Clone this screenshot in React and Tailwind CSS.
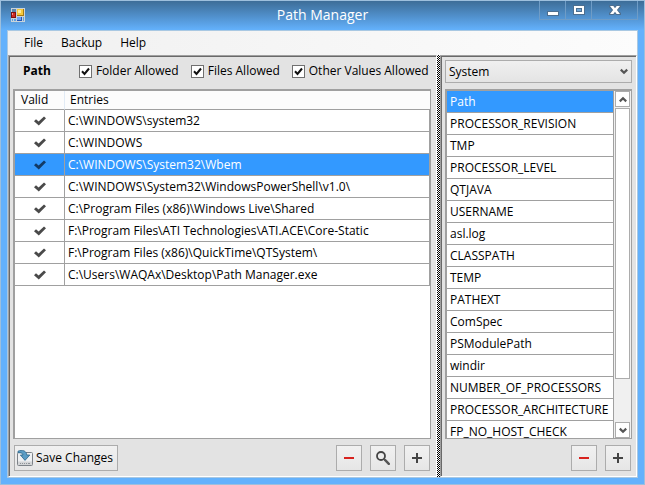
import { useState } from "react";

const paths = [
  "C:\\WINDOWS\\system32",
  "C:\\WINDOWS",
  "C:\\WINDOWS\\System32\\Wbem",
  "C:\\WINDOWS\\System32\\WindowsPowerShell\\v1.0\\",
  "C:\\Program Files (x86)\\Windows Live\\Shared",
  "F:\\Program Files\\ATI Technologies\\ATI.ACE\\Core-Static",
  "F:\\Program Files (x86)\\QuickTime\\QTSystem\\",
  "C:\\Users\\WAQAx\\Desktop\\Path Manager.exe",
];

const variables = [
  "Path",
  "PROCESSOR_REVISION",
  "TMP",
  "PROCESSOR_LEVEL",
  "QTJAVA",
  "USERNAME",
  "asl.log",
  "CLASSPATH",
  "TEMP",
  "PATHEXT",
  "ComSpec",
  "PSModulePath",
  "windir",
  "NUMBER_OF_PROCESSORS",
  "PROCESSOR_ARCHITECTURE",
  "FP_NO_HOST_CHECK",
];

/* -------------------------
    ICONS
------------------------- */
function AppIcon() {
  return (
    <svg width="14" height="14" viewBox="0 0 14 14" shapeRendering="crispEdges">
      <rect width="14" height="14" fill="#c9d3da" />
      <rect x="1" y="1" width="4" height="3" fill="#5d87ad" />
      <rect x="0" y="4" width="5" height="6" fill="#7d1111" />
      <rect x="1" y="5" width="3" height="4" fill="#cf2a22" />
      <rect x="1" y="5" width="1" height="2" fill="#f0928a" />
      <rect x="1" y="11" width="1" height="2" fill="#5da0e0" />
      <rect x="3" y="11" width="2" height="2" fill="#5da0e0" />
      <rect x="6" y="1" width="7" height="7" fill="#a67a10" />
      <rect x="6" y="1" width="6" height="6" fill="#f6c93c" />
      <rect x="7" y="2" width="3" height="3" fill="#fdeb9a" />
      <rect x="6" y="9" width="5" height="4" fill="#2458b8" />
      <rect x="6" y="9" width="4" height="3" fill="#6da2f2" />
      <rect x="12" y="9" width="1" height="4" fill="#5da0e0" />
    </svg>
  );
}

function ValidIcon({ selected }) {
  return (
    <svg width="12" height="10" viewBox="0 0 12 10" className="mx-auto block">
      <path d="M0 5.2 2 3.2 4.6 5.6 10 .4 12 2.2 4.8 9.4Z" fill={selected ? "#123a66" : "#4a4a4a"} />
    </svg>
  );
}

function SaveIcon() {
  return (
    <svg width="16" height="16" viewBox="0 0 16 16">
      <rect x=".5" y="2.5" width="15" height="13" rx="1" fill="#eef0f2" stroke="#7d8288" />
      <path d="M1 11.5h14V15H1z" fill="#d3d5d7" />
      <path d="M3 13.5h1M5 13.5h1M7 13.5h1M9 13.5h1M11 13.5h2" stroke="#8e9398" />
      <path d="M1 1.2C5-.6 9.6.6 9.8 5h3L8 10.4 3.4 5H6C6 3.4 4 2.4 1 2.8Z" fill="#5a9cc4" stroke="#2a648a" strokeWidth=".8" />
    </svg>
  );
}

function MinusIcon() {
  return (
    <svg width="12" height="12" viewBox="0 0 12 12" shapeRendering="crispEdges">
      <path d="M1 5h10v2H1z" fill="#d8231f" />
    </svg>
  );
}

function PlusIcon() {
  return (
    <svg width="12" height="12" viewBox="0 0 12 12" shapeRendering="crispEdges">
      <path d="M1 5h4V1h2v4h4v2H7v4H5V7H1z" fill="#444" />
    </svg>
  );
}

function SearchIcon() {
  return (
    <svg width="14" height="14" viewBox="0 0 14 14" fill="none">
      <circle cx="5" cy="5" r="4" stroke="#444" strokeWidth="1.8" />
      <path d="m8 8 1.5 1.5" stroke="#555" strokeWidth="1.5" />
      <path d="m9.2 9.2 3.6 3.6" stroke="#555" strokeWidth="2.4" strokeLinecap="round" />
    </svg>
  );
}

function Chevron({ up }) {
  return (
    <svg width="8" height="7" viewBox="0 0 8 7" fill="none" className="pointer-events-none">
      <path d={up ? "M.8 5.4 4 2.2 7.2 5.4" : "M.8 1.6 4 4.8 7.2 1.6"} stroke="#555" strokeWidth="2.2" />
    </svg>
  );
}

/* -------------------------
    CONTROLS
------------------------- */
function CheckOption({ label }) {
  return (
    <label className="flex items-center gap-1 whitespace-nowrap">
      <span className="grid">
        <input
          type="checkbox"
          defaultChecked
          className="peer col-start-1 row-start-1 size-[13px] appearance-none border border-[#707070] bg-white"
        />
        <svg
          viewBox="0 0 13 13"
          className="pointer-events-none invisible col-start-1 row-start-1 size-[13px] peer-checked:visible"
        >
          <path d="M3 6.3 5.5 9 10 3.5" fill="none" stroke="#111" strokeWidth="2" />
        </svg>
      </span>
      {label}
    </label>
  );
}

function IconButton({ label, children }) {
  return (
    <button
      aria-label={label}
      className="grid size-[26px] shrink-0 place-items-center border border-[#acacac] bg-linear-to-b from-[#f1f1f1] to-[#e6e6e6]"
    >
      {children}
    </button>
  );
}

function App() {
  const [selectedPath, setSelectedPath] = useState(2);
  const [selectedVar, setSelectedVar] = useState(0);

  return (
    <div className="flex h-screen cursor-default flex-col border border-[#9dbfdd] bg-[#63b1fc] font-['Open_Sans','Noto_Sans',sans-serif] text-xs leading-4 text-black">

      {/* TITLE BAR */}
      <header className="grid h-[29px] shrink-0 grid-cols-[1fr_auto_1fr] items-start bg-linear-to-b from-[#3d6d98] to-[#63b1fc] px-1.5">
        <div className="pt-[7px] pl-1">
          <AppIcon />
        </div>
        <h1 className="pt-1 text-sm leading-5 text-white">Path Manager</h1>
        <div className="flex h-[19px] justify-self-end border-x border-b border-[#6f9cc6]">
          <button aria-label="Minimize" className="grid w-[26px] place-items-center border-r border-[#6f9cc6]">
            <svg width="12" height="16" viewBox="0 0 12 16" shapeRendering="crispEdges">
              <path d="M0 9h12v5H0z" fill="#4d6f90" />
              <path d="M1 10h10v3H1z" fill="#fff" />
            </svg>
          </button>
          <button aria-label="Maximize" className="grid w-[26px] place-items-center border-r border-[#6f9cc6]">
            <svg width="12" height="10" viewBox="0 0 12 10" shapeRendering="crispEdges">
              <path d="M0 0h12v10H0z" fill="#4d6f90" />
              <path d="M1 1h10v8H1z" fill="#fff" />
              <path d="M3 3h6v4H3z" fill="#4d6f90" />
              <path d="M4 4h4v2H4z" fill="#6fa6d8" />
            </svg>
          </button>
          <button aria-label="Close" className="grid w-[45px] place-items-center">
            <svg width="12" height="10" viewBox="0 0 12 10">
              <path d="M0 0h5l1 1.500L7 0h5v2L9 5l3 3v2H7L6 8.500 5 10H0V8l3-3-3-3Z" fill="#4d6f90" />
              <path d="M1 1h3.300L6 3.200 7.700 1H11L7.900 5 11 9H7.700L6 6.800 4.300 9H1l3.100-4Z" fill="#fff" />
            </svg>
          </button>
        </div>
      </header>

      <div className="mx-1.5 mb-1.5 flex min-h-0 flex-1 flex-col border border-[#a9c8e2] bg-[#e3e3e3]">

        {/* MENU */}
        <nav className="flex h-6 shrink-0 items-center gap-0.5 bg-linear-to-r from-[#f0f0f0] to-[#fcfcfc] px-2">
          <button className="px-2">File</button>
          <button className="px-2">Backup</button>
          <button className="px-2">Help</button>
        </nav>

        <main className="flex min-h-0 flex-1">

          {/* PATH ENTRIES */}
          <section className="flex min-w-0 flex-1 flex-col border border-t-[#a0a0a0] border-r-white border-b-white border-l-[#a0a0a0] inset-shadow-[1px_1px_#696969] pt-px pr-[5px] pb-px pl-1">
            <div className="flex h-8 shrink-0 items-center gap-3 pb-1 pl-2.5">
              <h2 className="mr-4 font-bold">Path</h2>
              <CheckOption label="Folder Allowed" />
              <CheckOption label="Files Allowed" />
              <CheckOption label="Other Values Allowed" />
            </div>

            <div className="min-h-0 flex-1 overflow-hidden border border-t-2 border-l-2 border-[#a0a0a0] bg-white">
              <table className="w-full table-fixed border-separate border-spacing-0 text-left">
                <thead>
                  <tr className="h-[19px] bg-[#fcfcfc]">
                    <th className="w-[50px] border-r border-b border-r-[#e2ebf5] border-b-[#a0a0a0] pl-1.5 font-normal">Valid</th>
                    <th className="border-b border-[#a0a0a0] pl-[5px] font-normal">Entries</th>
                  </tr>
                </thead>
                <tbody>
                  {paths.map((path, i) => (
                    <tr
                      key={path}
                      onClick={() => setSelectedPath(i)}
                      className={i === selectedPath ? "h-[22px] bg-[#3399ff] text-white" : "h-[22px]"}
                    >
                      <td className="border-r border-b border-[#a0a0a0]">
                        <ValidIcon selected={i === selectedPath} />
                      </td>
                      <td className="truncate border-r border-b border-[#a0a0a0] pl-[3px]">{path}</td>
                    </tr>
                  ))}
                </tbody>
              </table>
            </div>

            <div className="flex shrink-0 gap-2 px-px pt-1.5 pb-1">
              <button className="mr-auto flex h-[26px] items-center gap-[3px] border border-[#acacac] bg-linear-to-b from-[#f1f1f1] to-[#e6e6e6] pr-1 pl-0.5">
                <SaveIcon />
                Save Changes
              </button>
              <IconButton label="Remove entry"><MinusIcon /></IconButton>
              <IconButton label="Find entry"><SearchIcon /></IconButton>
              <IconButton label="Add entry"><PlusIcon /></IconButton>
            </div>
          </section>

          {/* SPLITTER */}
          <div className="w-[3px] shrink-0 bg-[repeating-conic-gradient(#000_0_25%,#fff_0_50%)] bg-size-[2px_2px]" />

          {/* VARIABLES */}
          <section className="flex w-[197px] shrink-0 flex-col border border-t-[#a0a0a0] border-r-white border-b-white border-l-[#a0a0a0] inset-shadow-[1px_1px_#696969] pt-px pr-1 pb-px pl-1">
            <div className="grid h-8 shrink-0 items-start pt-[3px]">
              <select
                aria-label="Scope"
                className="col-start-1 row-start-1 h-[23px] appearance-none border border-[#acacac] bg-linear-to-b from-[#f0f0f0] to-[#e4e4e4] px-[3px]"
              >
                <option>System</option>
                <option>User</option>
              </select>
              <span className="pointer-events-none col-start-1 row-start-1 mr-1 grid h-[23px] place-items-center justify-self-end">
                <Chevron />
              </span>
            </div>

            <div className="flex min-h-0 flex-1 overflow-hidden border border-t-2 border-l-2 border-[#a0a0a0] bg-white">
              <ul className="min-w-0 flex-1 overflow-hidden border-r border-[#a0a0a0]">
                {variables.map((name, i) => (
                  <li key={name} className="h-[22px] border-b border-[#a0a0a0]">
                    <button
                      onClick={() => setSelectedVar(i)}
                      className={
                        i === selectedVar
                          ? "h-full w-full bg-[#3399ff] px-[3px] text-left text-white"
                          : "h-full w-full px-[3px] text-left"
                      }
                    >
                      {name}
                    </button>
                  </li>
                ))}
              </ul>
              <div className="flex w-[17px] flex-col bg-[#f0f0f0] px-px">
                <button aria-label="Scroll up" className="grid h-4 shrink-0 place-items-center border border-[#acacac] bg-white">
                  <Chevron up />
                </button>
                <div className="mt-px h-[78%] border border-[#acacac] bg-white" />
                <button aria-label="Scroll down" className="mt-auto grid h-4 shrink-0 place-items-center border border-[#acacac] bg-white">
                  <Chevron />
                </button>
              </div>
            </div>

            <div className="flex shrink-0 justify-end gap-2 px-px pt-1.5 pb-1">
              <IconButton label="Remove variable"><MinusIcon /></IconButton>
              <IconButton label="Add variable"><PlusIcon /></IconButton>
            </div>
          </section>

        </main>
      </div>
    </div>
  );
}

export default App;
